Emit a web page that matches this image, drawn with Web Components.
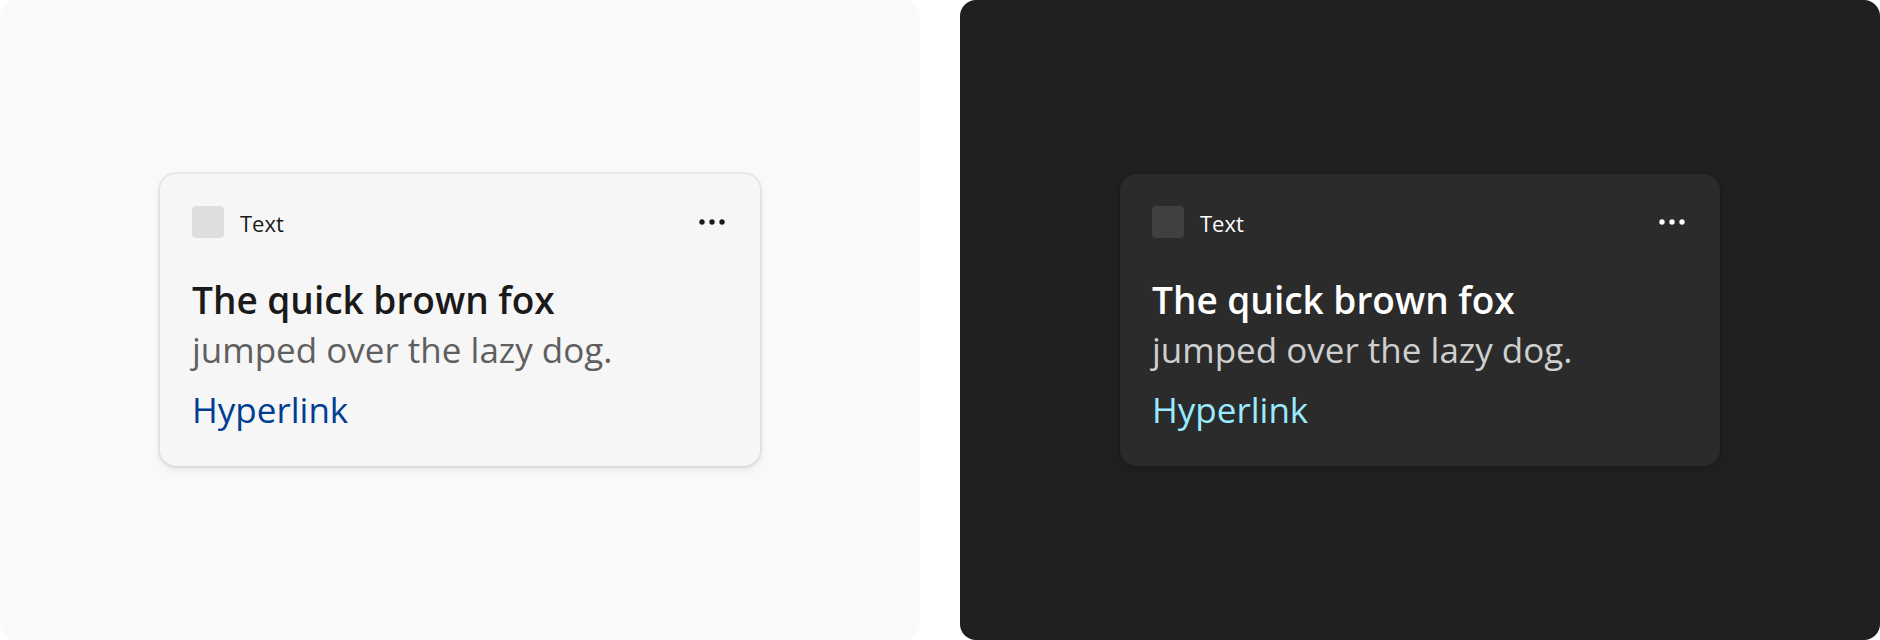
<!DOCTYPE html>
<html lang="en"><head><meta charset="utf-8"><title>Widget card text</title>
<style>
body{margin:0;background:#fff;font-family:"Open Sans","Noto Sans",sans-serif}
</style></head><body>
<theme-gallery>
<theme-panel theme="light"><text-card></text-card></theme-panel>
<theme-panel theme="dark"><text-card></text-card></theme-panel>
</theme-gallery>
<script>
const define=(name,html)=>{
  const t=document.createElement('template');t.innerHTML=html;
  customElements.define(name,class extends HTMLElement{
    constructor(){super();this.attachShadow({mode:'open'}).append(t.content.cloneNode(true));}
  });
};
define('theme-gallery',`<style>
:host{display:grid;grid-template-columns:1fr 1fr;gap:40px;min-height:100vh}
</style><slot></slot>`);
define('theme-panel',`<style>
:host{display:flex;align-items:center;justify-content:center;border-radius:16px;background:var(--page);
--page:#f9f9f9;--card:#f6f6f6;--edge:rgba(0,0,0,.06);--swatch:#dedede;--text:#1a1a1a;--sub:#5f5f5f;--link:#003e92;--shadow:rgba(0,0,0,.08)}
:host([theme=dark]){--page:#202020;--card:#2b2b2b;--edge:rgba(0,0,0,.05);--swatch:#404040;--text:#fff;--sub:#cfcfcf;--link:#99ebff;--shadow:rgba(0,0,0,.13)}
</style><slot></slot>`);
define('text-card',`<style>
:host{display:block;box-sizing:border-box;width:600px;max-width:90%;padding:32px;border-radius:16px;background:var(--card);color:var(--text);box-shadow:0 0 0 2px var(--edge),0 4px 8px var(--shadow)}
header{display:flex;align-items:flex-start;gap:16px;height:32px}
.swatch{width:32px;height:32px;border-radius:4px;background:var(--swatch)}
.name{flex:1;font-size:22px;line-height:34px}
button{padding:0;border:0;background:none;color:inherit;width:32px;height:32px}
svg{display:block}
h2{margin:36px 0 0;font-size:37px;line-height:52px;font-weight:600}
p{margin:0;font-size:35px;line-height:48px;color:var(--sub)}
a{display:block;margin-top:12px;font-size:35px;line-height:48px;color:var(--link);text-decoration:none}
</style>
<header><span class="swatch"></span><span class="name">Text</span>
<button type="button" aria-label="More options"><svg width="32" height="32" fill="currentColor"><circle cx="6" cy="16" r="2.7"/><circle cx="16" cy="16" r="2.7"/><circle cx="26" cy="16" r="2.7"/></svg></button></header>
<h2>The quick brown fox</h2><p>jumped over the lazy dog.</p><a href="#">Hyperlink</a>`);
</script></body></html>
